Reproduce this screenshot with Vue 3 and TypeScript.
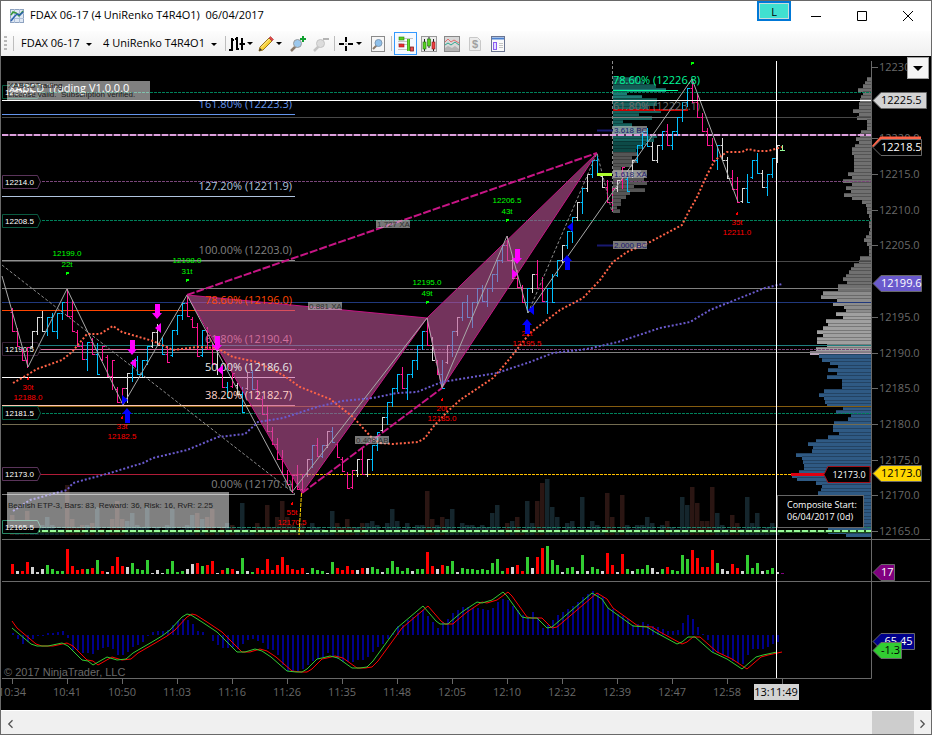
<script setup lang="ts">
type Kind = 'm' | 'c' | 'w'
interface Bar { x: number; top: number; bottom: number; open: number; close: number; kind: Kind }
interface Rule { y: number; color: string; x1?: number; x2?: number; dash?: string }

const STEP = 5
const FIRST = 12.5
const xAt = (i: number): number => FIRST + i * STEP

// Bars are written as "kind top bottom", in thirds of a pixel below the panel's origin.
const series: { origin: number; data: string }[] = [
  {
    origin: 240,
    data: 'm205-275 m263-320 m320-362 m320-383 w273-325 w232-285 w213-275 c232-288 c220-275 c220-297 c185-240 m147-232 m183-275 m270-320 m305-360 c305-392 m293-345 c310-405 m317-362 m345-410 m360-450 m440-490 m445-495 w400-490 c360-425 c348-405 c360-412 c317-375 w275-325 w253-318 c290-345 m317-370 c270-350 c225-285 c190-240 m165-230 m230-265 m250-350 c270-350 m262-330 m310-375 w330-405 m375-445 c425-475 m400-445 w430-465 c440-520 w395-450 c390-450 m420-480 m468-525 m498-575 m560-615 m595-660 m630-705 m690-735 m705-758 m675-750 m702-758 w658-710 c615-685 m595-650 c615-655 w572-625 c560-610 m607-655 m650-695 m695-747 m690-747 w658-712 m620-705 w658-710 c615-692 c575-632 w530-575 c487-555 c445-500 c403-457 m382-447 c403-480 c360-415 c315-390 c273-330 m235-317 w290-363 m360-405 c360-447 w315-372 c273-350 w232-287 c187-242 c165-235 c187-265 c145-192 c135-187 c145-200 c103-157 c60-125 c15-70',
  },
  {
    origin: 180,
    data: 'm168-243 w230-298 m270-325 m315-370 c325-400 w283-340 m240-327 m290-367 c325-402 c283-370 c240-292 w195-250 c153-208 c112-188 w67-122 c25-102',
  },
  {
    origin: 55,
    data: 'w357-412 c315-370 c297-360 w358-400 m375-445 m400-470 w375-412 m335-402 c365-412 w315-370 c270-325 c228-285 c220-275 w262-317 w270-325 c228-285 m207-272 c228-285 c185-242 c140-200 c98-155 m75-145 m115-190 m175-230 m220-272 m250-317 c270-345 w250-318 w305-372 m345-405 m365-443 w400-443 c357-443 c315-372 c295-358 w345-400 c357-422 c310-370 w270-325',
  },
]

const bars: Bar[] = []
let last = 312
for (const part of series) {
  for (const item of part.data.split(' ')) {
    const kind = item[0] as Kind
    const [a, b] = item.slice(1).split('-').map(Number)
    const top = Math.round(part.origin + a / 3)
    const bottom = Math.round(part.origin + b / 3)
    const down = (top + bottom) / 2 > last
    const close = down ? bottom - 1 : top
    const open = Math.min(bottom - 2, Math.max(top + 2, last))
    bars.push({ x: xAt(bars.length), top, bottom, open, close, kind })
    last = close
  }
}
const barPath = (kind: Kind): string =>
  bars
    .filter((b) => b.kind === kind)
    .map((b) => `M${b.x} ${b.top}V${b.bottom}M${b.x} ${b.open + 0.5}h-2M${b.x} ${b.close + 0.5}h2.5`)
    .join('')

const volume =
  'R10 W3 R3 R12 W7 W2 W5 G9 G5 G3 G3 R25 R8 R4 R5 G5 R6 G14 R3 W2 R8 R17 R8 W7 G11 G5 G4 G14 W1 W4 W1 G5 G13 G2 G3 W5 W10 R11 G8 R9 R13 W1 R4 G6 R5 W3 G16 W3 G2 R6 R4 R15 R4 R9 R17 R9 R5 R4 R6 W1 G6 G4 G3 W1 G12 R6 R4 R8 R4 W4 R6 W6 G7 G5 W2 G6 G13 G7 G3 G6 W3 G5 G5 R22 R8 W5 R9 G8 G13 W2 G6 G5 G5 G4 G5 G4 G11 G15 G3 R6 W7 R9 R3 G17 W6 R17 R26 G28 G14 G9 W2 G6 G7 W3 G19 W3 G7 G5 W3 R21 R9 W2 R20 G5 W3 G5 G5 G9 W6 W2 G5 R7 G4 G3 G19 G15 R24 R16 R7 R7 R24 G11 W5 W3 R10 R6 W3 G19 G6 G11 W3 G4 G6 W2'
    .split(' ')
    .map((s, i) => ({ kind: s[0], h: Number(s.slice(1)), x: xAt(i) }))

const macd = [
  2, -4, -9, -7, -4, -1, -1, 2, 2, 3, 4, -3, -15, -15, -18, -18, -19, -15, -13, -12, -14, -20, -20, -17, -12, -10, -7,
  -1, 3, 4, 4, 5, 10, 14, 16, 15, 11, 4, 3, 0, -6, -10, -13, -13, -12, -14, -9, -5, -4, -6, -8, -14, -15, -20, -30, -36,
  -36, -36, -34, -30, -26, -24, -22, -18, -21, -24, -27, -27, -27, -25, -25, -22, -17, -12, -9, -4, 2, 9, 10, 15, 18,
  22, 25, 19, 13, 7, 13, 16, 22, 25, 28, 28, 27, 27, 26, 25, 27, 33, 36, 35, 29, 25, 20, 18, 23, 18, 7, 10, 15, 20, 23,
  26, 29, 33, 38, 41, 44, 42, 38, 27, 26, 21, 19, 16, 10, 11, 13, 11, 9, 8, 6, 4, 4, 5, 12, 20, 16, 8, 1, -5, -17, -18,
  -20, -22, -26, -28, -29, -20, -14, -14, -14, -12, -9, -7,
]
const macdPath = macd.map((v, i) => `M${xAt(i) + 0.5} 635v${-v}`).join('')

const signal =
  '12,628 31,644 37,646 48,646 62,643 68,646 82,660 88,661 93,665 107,657 117,660 126,659 133,653 152,642 162,636 170,630 182,617 187,614 191,615 202,622 217,632 237,652 245,652 255,649 262,651 271,657 287,671 296,672 302,672 307,669 317,659 322,658 330,656 338,658 352,668 360,668 367,667 373,661 397,628 423,606 436,621 440,624 448,624 450,622 462,612 477,602 482,603 492,600 503,592 507,596 522,617 527,618 537,618 547,628 552,627 592,593 602,599 608,608 633,626 647,627 655,632 677,644 682,642 688,637 695,637 712,652 727,659 742,669 756,657 763,655 777,652'
const orangeMa =
  '13,383 27,375 37,369 62,360 72,352 87,334 100,334 113,326 122,332 153,341 173,350 197,347 217,348 233,357 257,362 283,375 300,387 330,399 353,417 372,438 380,443 393,444 418,442 425,438 433,427 447,412 460,400 493,378 507,362 530,333 560,310 583,298 600,280 613,262 627,252 650,242 682,225 688,213 697,197 707,175 715,160 727,152 742,152 748,149 757,151 768,151 782,147'
const purpleMa =
  '13,511 30,500 67,490 73,483 110,473 143,463 153,458 187,450 218,437 245,434 258,422 283,418 317,407 342,401 373,398 397,393 417,392 442,382 497,373 530,362 553,353 587,349 618,342 660,328 690,322 710,310 740,298 765,288 782,284'

// Row insets of the composite profile, in thirds of a pixel; 272 is an empty row.
const insets = [
  260, 255, 250, 235, 250, 243, 240, 238, 237, 218, 237, 231, 262, 262, 262, 243, 240, 227, 238, 225, 217, 215, 222, 222,
  222, 222, 222, 203, 215, 190, 215, 198, 212, 192, 215, 245, 257, 262, 262, 268, 270, 268, 268, 269, 267, 258, 252, 262,
  268, 266, 268, 240, 237, 222, 212, 208, 198, 190, 200, 175, 175, 130, 122, 170, 158, 193, 197, 168, 188, 137, 145, 130,
  112, 128, 111, 111, 140, 107, 90, 118, 127, 150, 173, 143, 170, 140, 187, 187, 187, 132, 116, 132, 135, 140, 188, 167,
  212, 203, 163, 158, 158, 178, 145, 108, 84, 99, 97, 48, 67, 69, 72, 72, 57, 35, 52, 108, 127, 122, 115, 140, 140, 130,
  120, 130, 140, 150, 160, 180, 145, 145, 198,
]
const composite = insets.map((v, i) => {
  const y = 77 + i * 3.51
  const color = y > 352 ? '#2f5a84' : y > 348 ? '#b9a6b9' : y > 310 ? '#a0a0a0' : y > 288 ? '#8c8c8c' : '#707070'
  return { x: 780 + v / 3, w: (272 - v) / 3, y, color }
})
// Row reach of the session profile, same unit, measured from 157.
const session = [
  233, 250, 285, 315, 200, 243, 290, 290, 262, 300, 235, 275, 187, 215, 230, 250, 290, 280, 255, 245, 225, 230, 215, 230,
  213, 182, 240, 255, 250, 258, 220, 252, 207, 195, 180, 182, 170, 178,
].map((v, i) => ({
  y: 77 + i * 3.57,
  w: (v - 157) / 3,
  color: i < 3 ? '#145a55' : i < 6 ? '#1c7a74' : i < 12 ? '#17605b' : i < 18 ? '#14605c' : i < 21 ? '#0d4a47' : '#555555',
}))

const rules: Rule[] = [
  { y: 92.5, color: '#00805a', dash: '3 1' },
  { y: 114.5, color: '#6495ed', x2: 295 },
  { y: 117.5, color: '#484848' },
  { y: 181.5, color: '#7a467a', dash: '3 1' },
  { y: 196.5, color: '#b0c4de', x2: 295 },
  { y: 220.5, color: '#00805a', dash: '3 1' },
  { y: 260.5, color: '#909090', x2: 295 },
  { y: 261.5, color: '#484848' },
  { y: 288.5, color: '#808080' },
  { y: 302.5, color: '#20387c' },
  { y: 310.5, color: '#ff4500', x2: 295 },
  { y: 345.5, color: '#1f7f7f' },
  { y: 349.5, color: '#7a467a', dash: '3 1' },
  { y: 349.5, color: '#db70a0', x2: 295 },
  { y: 352.5, color: '#808080' },
  { y: 377.5, color: '#ffffff', x2: 295 },
  { y: 405.5, color: '#ffc8b4', x2: 295 },
  { y: 406.5, color: '#855c10' },
  { y: 413.5, color: '#00805a', dash: '3 1' },
  { y: 424.5, color: '#736c50' },
  { y: 474.5, color: '#b01c38', x2: 300 },
  { y: 474.5, color: '#ffc000', x1: 300, x2: 791, dash: '3 1' },
  { y: 494.5, color: '#808080', x2: 295 },
  { y: 527.5, color: '#1f8068', dash: '4 1' },
]

const fibs = [
  { t: '161.80% (12223.3)', y: 108, c: '#6495ed' },
  { t: '127.20% (12211.9)', y: 190, c: '#b0c4de' },
  { t: '100.00% (12203.0)', y: 254, c: '#808080' },
  { t: '78.60% (12196.0)', y: 304, c: '#ff4500' },
  { t: '61.80% (12190.4)', y: 343, c: '#d0709c' },
  { t: '50.00% (12186.6)', y: 371, c: '#e8e8e8' },
  { t: '38.20% (12182.7)', y: 399, c: '#ffd0c8' },
  { t: '0.00% (12170.1)', y: 488, c: '#808080' },
]

const swingHighs = [
  { x: 67, y: 256, p: '12199.0', n: '22t' },
  { x: 187, y: 263, p: '12198.0', n: '31t' },
  { x: 427, y: 285, p: '12195.0', n: '49t' },
  { x: 507, y: 203, p: '12206.5', n: '43t' },
]
const swingLows = [
  { x: 28, y: 390, p: '12188.0', n: '30t' },
  { x: 122, y: 429, p: '12182.5', n: '33t' },
  { x: 292, y: 515, p: '12170.5', n: '55t' },
  { x: 442, y: 411, p: '12185.0', n: '20t' },
  { x: 527, y: 336, p: '12195.5', n: '22t' },
  { x: 737, y: 225, p: '12211.0', n: '35t' },
]
const markers = [
  { y: 92, t: '12226.5', c: '#0a5a40' },
  { y: 182, t: '12214.0', c: '#5a345a' },
  { y: 221, t: '12208.5', c: '#0a5a40' },
  { y: 349, t: '12190.5', c: '#3a243a' },
  { y: 413, t: '12181.5', c: '#0a5a40' },
  { y: 474, t: '12173.0', c: '#5a345a' },
  { y: 527, t: '12165.5', c: '#2a8a68' },
]
const ratios = [
  { x: 376, y: 220, t: '1.727 XA' },
  { x: 308, y: 302, t: '0.881 XA' },
  { x: 355, y: 436, t: '0.408 AB' },
  { x: 613, y: 126, t: '3.618 BC' },
  { x: 613, y: 170, t: '1.618 XA' },
  { x: 613, y: 241, t: '2.000 BC' },
]
const downArrows = [[157, 304], [132, 340], [217, 336], [517, 249]]
const upArrows = [[127, 408], [527, 319], [567, 255]]
const leftFlags = [[155, 328, '#ff00ff'], [130, 363, '#ff00ff'], [217, 370, '#ff00ff'], [528, 310, '#0000ff'], [567, 227, '#0000ff']]
const rightFlags = [[122, 400, '#0000ff'], [512, 274, '#ff00ff']]

const prices = [12230, 12220, 12215, 12210, 12205, 12195, 12190, 12185, 12180, 12175, 12170, 12165]
const priceY = (p: number): number => Math.round(531 - (p - 12165) * 7.14)
const times = ['10:34', '10:41', '10:50', '11:03', '11:16', '11:26', '11:35', '11:48', '12:05', '12:10', '12:32', '12:39', '12:47', '12:58']
const tags = [
  { y: 100, x2: 926, t: '12225.5', fill: '#d3d3d3', ink: '#000' },
  { y: 147, x2: 921, t: '12218.5', fill: '#000', ink: '#fff' },
  { y: 283, x2: 921, t: '12199.6', fill: '#6a5acd', ink: '#fff' },
  { y: 473, x2: 921, t: '12173.0', fill: '#ffd700', ink: '#000' },
  { y: 572, x2: 894, t: '17', fill: '#800080', ink: '#fff' },
  { y: 641, x2: 914, t: '-65.45', fill: '#00008b', ink: '#fff' },
  { y: 650, x2: 901, t: '-1.3', fill: '#32cd32', ink: '#000' },
]
</script>

<template>
  <div class="window">
    <header class="titlebar">
      <svg class="appicon" viewBox="0 0 14 14" aria-hidden="true">
        <rect x="0.500" y="0.500" width="13" height="13" fill="#dfe8f4" stroke="#8ea3c0" />
        <path d="M0 4.500h14M0 9.500h14M4.500 0v14M9.500 0v14" stroke="#aebfd8" />
        <path d="M1 6l2-3 3 1 3 3 4-5" fill="none" stroke="#3c9a3c" stroke-width="1.500" />
        <path d="M1 12l3-4 3-3 3 1 3-3" fill="none" stroke="#2c5fae" stroke-width="1.500" />
      </svg>
      <h1>FDAX 06-17 (4 UniRenko T4R4O1)&nbsp; 06/04/2017</h1>
      <button class="link" type="button">L</button>
      <button class="win" type="button" aria-label="Minimize"><svg viewBox="0 0 12 12"><path d="M1 6.500h10" /></svg></button>
      <button class="win" type="button" aria-label="Maximize"><svg viewBox="0 0 12 12"><path d="M1.500 1.500h9v9h-9z" /></svg></button>
      <button class="win" type="button" aria-label="Close"><svg viewBox="0 0 12 12"><path d="M1 1l10 10M11 1L1 11" /></svg></button>
    </header>

    <nav class="toolbar" aria-label="Chart tools">
      <span class="grip"></span>
      <span class="sep"></span>
      <span class="pick instrument"><select aria-label="Instrument"><option>FDAX 06-17</option></select></span>
      <span class="pick interval"><select aria-label="Interval"><option>4 UniRenko T4R4O1</option></select></span>
      <span class="sep"></span>
      <button type="button" class="drop" aria-label="Bar style">
        <svg viewBox="0 0 16 16"><path d="M3 2v13M0 14h3M3 4h2M8 1v13M6 3h2M8 13h2M13 2v12M13 8h3M10.500 8H13" fill="none" stroke="#000" stroke-width="2" /></svg>
      </button>
      <button type="button" class="drop" aria-label="Drawing tools">
        <svg viewBox="0 0 16 16">
          <path d="M1 15l1-4L11 2l3 3-9 9z" fill="#f7d038" stroke="#9a7420" />
          <path d="M3 11.500L11.500 3" stroke="#fff0a0" /><path d="M11 2l1.500-1.500L15.500 3.500 14 5z" fill="#e04848" stroke="#a83838" stroke-width="0.600" />
          <path d="M1 15l1-3 2 2z" fill="#333" />
        </svg>
      </button>
      <button type="button" class="tool" aria-label="Zoom in">
        <svg viewBox="0 0 16 16">
          <path d="M1 15l5-5" stroke="#8a7a6a" stroke-width="2.500" /><circle cx="7.500" cy="7.500" r="4" fill="#9cc8ec" stroke="#9a9a9a" />
          <path d="M13 0v6M10 3h6" stroke="#10a030" stroke-width="2" />
        </svg>
      </button>
      <button type="button" class="tool" aria-label="Zoom out">
        <svg viewBox="0 0 16 16">
          <path d="M1 15l5-5" stroke="#c4c4c4" stroke-width="2.500" /><circle cx="7.500" cy="7.500" r="4" fill="#dcdcdc" stroke="#c4c4c4" />
          <path d="M10 3h6" stroke="#b4b4b4" stroke-width="2" />
        </svg>
      </button>
      <span class="sep"></span>
      <button type="button" class="drop" aria-label="Cursor">
        <svg viewBox="0 0 16 16"><path d="M8 1v5M8 10v5M1 8h5M10 8h5" stroke="#000" stroke-width="2" /><path d="M7.500 8h1" stroke="#000" /></svg>
      </button>
      <button type="button" class="tool" aria-label="Data box">
        <svg viewBox="0 0 16 16">
          <rect x="1.500" y="0.500" width="13" height="15" fill="#f6f6f6" stroke="#8a8a8a" />
          <path d="M3 13l4-4" stroke="#8a7a6a" stroke-width="2" /><circle cx="8.500" cy="7" r="3.500" fill="#8fc0ea" stroke="#7d99b4" />
        </svg>
      </button>
      <span class="sep"></span>
      <button type="button" class="tool on" aria-label="Chart trader">
        <svg viewBox="0 0 16 16">
          <path d="M6 2.500h9M0 5.500h9M6 8.500h3M0 13.500h11M0 8h4" stroke="#c4c4c4" />
          <rect x="1" y="1" width="5" height="3" fill="#58d020" stroke="#2c8010" stroke-width="0.600" /><rect x="1" y="8" width="5" height="3" fill="#e83030" stroke="#a01818" stroke-width="0.600" />
          <path d="M10.500 3v12" stroke="#2c8010" stroke-width="3" /><path d="M10.500 3v12" stroke="#66e030" stroke-width="2" />
          <rect x="12.500" y="11" width="3" height="4" fill="#e85050" stroke="#802020" stroke-width="0.800" />
        </svg>
      </button>
      <button type="button" class="tool" aria-label="Data series">
        <svg viewBox="0 0 16 16">
          <rect x="0.500" y="0.500" width="15" height="15" fill="#ececec" stroke="#999" />
          <path d="M3.500 3v12M8 1v11M12.500 3v12" stroke="#222" /><rect x="2" y="6" width="3" height="7" fill="#58d020" stroke="#207010" stroke-width="0.600" />
          <rect x="6.500" y="3" width="3" height="7" fill="#58d020" stroke="#207010" stroke-width="0.600" /><rect x="11" y="6" width="3" height="7" fill="#f04040" stroke="#801818" stroke-width="0.600" />
        </svg>
      </button>
      <button type="button" class="tool" aria-label="Indicators">
        <svg viewBox="0 0 16 16">
          <rect x="0.500" y="0.500" width="15" height="15" fill="#d8d8d8" stroke="#888" /><path d="M1 12l3-2 4 2 3-2 4 3v2H1z" fill="#b4b4b4" />
          <path d="M1 6l3-3 3 3 3-2 5 3" fill="none" stroke="#e07070" /><path d="M1 9l3-2 3 2 4-3 4 3" fill="none" stroke="#30a890" />
        </svg>
      </button>
      <button type="button" class="tool" aria-label="Strategies">
        <svg viewBox="0 0 16 16">
          <path d="M2.500 1.500h8l3 3v10h-11z" fill="#ececec" stroke="#c8c8c8" />
          <text x="8" y="12" text-anchor="middle" class="dollar">$</text>
        </svg>
      </button>
      <button type="button" class="tool" aria-label="Properties">
        <svg viewBox="0 0 16 16">
          <rect x="1.500" y="0.500" width="13" height="15" fill="#fafafa" stroke="#6a7490" /><path d="M2 2.500h12" stroke="#4a80d0" stroke-width="2" />
          <rect x="3.500" y="6.500" width="3" height="7" fill="#e4dcff" stroke="#8a5cf0" /><path d="M9 7.500h4M9 9.500h4M9 11.500h4" stroke="#c4c4c4" />
        </svg>
      </button>
    </nav>

    <main class="chart">
      <svg class="plot" viewBox="1 56 930 654" role="img" aria-label="FDAX 06-17 price chart">
        <!-- dimmed volume behind the price panel -->
        <rect v-for="(v, i) in volume" :key="'d' + i" :x="v.x - 2.5" :y="535 - v.h * 2" width="4.500" :height="v.h * 2" :fill="v.kind === 'R' ? '#2b1613' : '#15262d'" />

        <g shape-rendering="crispEdges">
          <rect v-for="(r, i) in composite" :key="'p' + i" :x="r.x" :y="r.y" :width="r.w" height="4" :fill="r.color" />
          <rect v-for="(r, i) in session" :key="'s' + i" x="613" :y="r.y" :width="r.w" height="4" :fill="r.color" />
        </g>
        <g fill="#000" fill-opacity="0.250" shape-rendering="crispEdges">
          <rect v-for="(r, i) in composite" :key="'pl' + i" :x="r.x" :y="r.y" :width="r.w" height="1" />
          <rect v-for="(r, i) in session" :key="'sl' + i" x="613" :y="r.y" :width="r.w" height="1" />
        </g>

        <line v-for="(l, i) in rules" :key="'r' + i" :x1="l.x1 ?? 2" :x2="l.x2 ?? 871" :y1="l.y" :y2="l.y" :stroke="l.color" :stroke-dasharray="l.dash" />
        <path d="M613 90.500h65" stroke="#00fa9a" /><path d="M613 117.500h65" stroke="#808080" />
        <path d="M613 110h75" stroke="#d00000" stroke-width="2" /><path d="M791 474.500h80" stroke="#e00010" stroke-width="3" />
        <path d="M2 135h869" stroke="#5a3a5a" stroke-width="2" /><path d="M2 135h869" stroke="#dda0dd" stroke-width="2" stroke-dasharray="6 2" />
        <path d="M2 531.500h869" stroke="#1c4a1c" stroke-width="3" /><path d="M2 531h869" stroke="#98fb98" stroke-width="2" stroke-dasharray="6 2" />

        <g v-for="m in markers" :key="m.t">
          <path :d="`M2.500 ${m.y - 6.5}h35l3 6.500-3 6.500h-35z`" fill="#000" :stroke="m.c" />
          <text x="5" :y="m.y + 3" class="tiny" fill="#fff">{{ m.t }}</text>
        </g>

        <g fill="none">
          <path :d="barPath('m')" stroke="#ff1493" /><path :d="barPath('c')" stroke="#00bfff" /><path :d="barPath('w')" stroke="#dcdcdc" />
          <path d="M782.500 145v5M780 150.500h5" stroke="#98fb98" />
        </g>

        <path d="M187 295L427 318 302 493z M427 318L597 153 442 388z" fill="#c0559a" fill-opacity="0.600" stroke="#c71585" />

        <g fill="none">
          <path d="M2 276L28 367 67 289 123 405 187 295 292 492 427 318 442 388 507 236 528 313 692 79 738 202" stroke="#a9a9a9" />
          <path d="M2 265L295 494M528 313L597 153 612 212M612.500 61v151" stroke="#8c8c8c" stroke-dasharray="3 2" />
          <polyline :points="orangeMa" stroke="#ff6347" stroke-width="2" stroke-dasharray="2 2" />
          <polyline :points="purpleMa" stroke="#6a5acd" stroke-width="2" stroke-dasharray="2 2" />
          <path d="M187 295L597 153M302 493L442 388" stroke="#c71585" stroke-width="2" stroke-dasharray="8 2" />
        </g>

        <text v-for="f in fibs" :key="f.t" x="292" :y="f.y" text-anchor="end" class="label" :fill="f.c">{{ f.t }}</text>
        <text x="613" y="84" class="label" fill="#00fa9a">78.60% (12226.8)</text>
        <text x="613" y="110" class="label" fill="#6e6e6e">61.80% (12223.1)</text>

        <g v-for="s in swingHighs" :key="'h' + s.x" class="tiny" fill="#00ff00" text-anchor="middle">
          <text :x="s.x" :y="s.y">{{ s.p }}</text><text :x="s.x" :y="s.y + 11">{{ s.n }}</text>
          <path :d="`M${s.x - 1} ${s.y + 16}h3v2h-2v1h-1z`" />
        </g>
        <path d="M691 62h3v2h-2v1h-1z" fill="#00ff00" />
        <g v-for="s in swingLows" :key="'l' + s.x" class="tiny" fill="#ff0000" text-anchor="middle">
          <text :x="s.x" :y="s.y">{{ s.n }}</text><text :x="s.x" :y="s.y + 10">{{ s.p }}</text>
          <path :d="`M${s.x - 1} ${s.y - 12}h1v-1h1v3h-2z`" />
        </g>

        <path v-for="(a, i) in downArrows" :key="'da' + i" :d="`M${a[0] - 2} ${a[1]}h5v9h2l-5 6-5-6h3z`" fill="#ff00ff" />
        <path v-for="(a, i) in upArrows" :key="'ua' + i" :d="`M${a[0] - 2} ${a[1] + 15}h5v-9h2l-5-6-5 6h3z`" fill="#0000ff" />
        <path v-for="(f, i) in leftFlags" :key="'lf' + i" :d="`M${f[0]} ${f[1]}l6-5v10z`" :fill="String(f[2])" />
        <path v-for="(f, i) in rightFlags" :key="'rf' + i" :d="`M${f[0]} ${f[1]}v-5l6 5-6 5z`" :fill="String(f[2])" />

        <path d="M301.500 493L299 535" stroke="#ffd700" stroke-dasharray="4 1" />
        <path d="M597 174.500h15" stroke="#adff2f" stroke-width="3" />
        <path d="M597 130.500h16M597 245.500h16" stroke="#191970" stroke-width="2" />

        <g v-for="r in ratios" :key="r.t">
          <rect :x="r.x" :y="r.y" width="34" height="8" fill="#c8c8c8" fill-opacity="0.600" />
          <text :x="r.x + 1" :y="r.y + 7" class="tiny" :fill="r.x > 600 ? '#191970' : '#303030'">{{ r.t }}</text>
        </g>

        <rect x="7" y="81" width="143" height="19" fill="#fff" fill-opacity="0.500" />
        <text x="9" y="92" class="label" fill="#fff">XABCD Trading V1.0.0.0</text>
        <text x="8" y="88" class="note">XABCDTrading</text>
        <text x="8" y="97" class="note">License valid.&nbsp; Subscription verified.</text>
        <rect x="7" y="492" width="222" height="36" fill="#fff" fill-opacity="0.500" />
        <text x="8" y="508" class="note">Bearish ETP-3, Bars: 83, Reward: 36, Risk: 16, RvR: 2.25</text>

        <rect x="777.500" y="495.500" width="86" height="32" fill="#000" stroke="#666" />
        <text x="787" y="508" class="box">Composite Start:</text>
        <text x="787" y="520" class="box">06/04/2017 (0d)</text>
        <path d="M824 474.500l4-8h42v16h-42z" fill="#000" stroke="#a01018" />
        <text x="849" y="478" text-anchor="middle" class="box">12173.0</text>

        <!-- volume and MACD panels -->
        <rect v-for="(v, i) in volume" :key="'v' + i" :x="v.x - 1.5" :y="574 - v.h" width="3" :height="v.h" :fill="v.kind === 'R' ? '#ff0000' : v.kind === 'G' ? '#32cd32' : '#d3d3d3'" />
        <path d="M781 573.500h3" stroke="#800080" />
        <path :d="macdPath" stroke="#00008b" stroke-width="2" />
        <polyline :points="signal" transform="translate(5 0)" fill="none" stroke="#ff0000" />
        <path d="M12 621l5 7" stroke="#ff0000" />
        <polyline :points="signal" fill="none" stroke="#32cd32" />
        <text x="4" y="676" class="copy">© 2017 NinjaTrader, LLC</text>

        <path d="M871.500 61v617.500H2M2 539.500h928M2 581.500h928" fill="none" stroke="#696969" />
        <path d="M2 100.500h869M776.500 61v617" stroke="#fff" />

        <g v-for="p in prices" :key="p">
          <path :d="`M872 ${priceY(p) + 0.5}h6`" stroke="#696969" />
          <text x="879" :y="priceY(p) + 4" class="label" fill="#696969">{{ p }}.0</text>
        </g>
        <g v-for="(t, i) in times" :key="t">
          <path :d="`M${12.5 + i * 55} 679v5`" stroke="#696969" />
          <text :x="12 + i * 55" y="696" text-anchor="middle" class="label" fill="#696969">{{ t }}</text>
        </g>
        <path d="M782.500 679v5" stroke="#696969" />
        <rect x="754" y="684" width="45" height="16" fill="#d3d3d3" />
        <text x="776" y="696" text-anchor="middle" class="label" fill="#000">13:11:49</text>

        <path d="M873 147l8-9h40" fill="none" stroke="#ff6347" stroke-width="3" />
        <g v-for="g in tags" :key="g.t">
          <path :d="`M873 ${g.y}.500l8-8H${g.x2}.500v16H881z`" :fill="g.fill" stroke="#696969" />
          <text x="881" :y="g.y + 4" class="label" :fill="g.ink">{{ g.t }}</text>
        </g>
      </svg>
      <button class="menu" type="button" aria-label="Panel menu"></button>
    </main>

    <footer class="scroll">
      <button type="button" aria-label="Scroll left"><svg viewBox="0 0 8 8"><path d="M6 1L3 4l3 3" /></svg></button>
      <span class="track"></span>
      <span class="thumb"></span>
      <button type="button" aria-label="Scroll right"><svg viewBox="0 0 8 8"><path d="M2 1l3 3-3 3" /></svg></button>
    </footer>
  </div>
</template>

<style>
body {
  background: #000;
}
</style>

<style scoped>
.window {
  border: 1px solid #696969;
  background: #000;
  font-family: 'Open Sans', 'Noto Sans', sans-serif;
}
button {
  padding: 0;
  border: 0;
  background: none;
  font: inherit;
}
.titlebar {
  display: flex;
  align-items: center;
  height: 30px;
  background: #fff;
}
.appicon {
  width: 14px;
  height: 14px;
  margin: 0 6px 0 9px;
}
h1 {
  flex: 1;
  margin: 0;
  font-size: 11px;
  line-height: 16px;
  padding-bottom: 2px;
  font-weight: 400;
  color: #000;
}
.link {
  align-self: flex-start;
  width: 34px;
  height: 20px;
  margin-right: 2px;
  border: 2px solid #0078d7;
  background: #40e0d0;
  box-shadow: inset 0 0 0 1px #c8dcdc;
  font-size: 11px;
  line-height: 15px;
}
.win {
  width: 46px;
  height: 30px;
}
.win svg {
  width: 12px;
  height: 12px;
  fill: none;
  stroke: #000;
}
.toolbar {
  display: flex;
  align-items: center;
  height: 25px;
  padding-left: 3px;
  background: linear-gradient(#fdfdfd, #efefef);
}
.toolbar > * {
  flex-shrink: 0;
}
.grip {
  width: 3px;
  height: 15px;
  margin-right: 4px;
  background: repeating-linear-gradient(#b8b8b8 0 2px, transparent 2px 4px);
}
.sep {
  width: 1px;
  height: 15px;
  margin: 0 2px;
  background: #bdbdbd;
}
.pick {
  position: relative;
  display: flex;
}
.pick::after,
.drop::after {
  content: '';
  border: 3px solid transparent;
  border-top-color: #000;
  border-bottom: 0;
}
.pick::after {
  position: absolute;
  right: 6px;
  top: 9px;
}
.instrument {
  width: 82px;
}
.interval {
  width: 125px;
}
.pick select {
  appearance: none;
  width: 100%;
  height: 20px;
  padding: 0 0 2px 5px;
  border: 0;
  background: none;
  font: 11px 'Open Sans', 'Noto Sans', sans-serif;
  color: #000;
}
.toolbar svg {
  width: 16px;
  height: 16px;
}
.drop {
  display: flex;
  align-items: center;
  gap: 2px;
  width: 29px;
  padding-left: 1px;
}
.tool {
  display: flex;
  align-items: center;
  justify-content: center;
  width: 23px;
  height: 23px;
}
.on {
  border: 1px solid #3399ff;
  background: #f4f9ff;
}
.dollar {
  font: bold 11px 'Liberation Sans', sans-serif;
  fill: #a0a0a0;
}
.chart {
  position: relative;
}
.plot {
  display: block;
  width: 100%;
}
.label {
  font-size: 11px;
}
.tiny,
.note {
  font-family: 'Liberation Sans', sans-serif;
  font-size: 8px;
}
.note {
  fill: #1c1c1c;
}
.box {
  font-size: 9px;
  fill: #fff;
}
.copy {
  font-family: 'Liberation Sans', sans-serif;
  font-size: 11px;
  fill: #696969;
}
.menu {
  position: absolute;
  top: 1px;
  right: 2px;
  width: 22px;
  height: 22px;
  border: 1px solid #a0a0a0;
  background: #f4f4f4;
}
.menu::before {
  content: '';
  display: block;
  width: 0;
  margin: 0 auto;
  border: 5px solid transparent;
  border-top-color: #000;
  border-bottom: 0;
}
.scroll {
  display: flex;
  align-items: stretch;
  height: 23px;
  border-top: 1px solid #fff;
  background: #f0f0f0;
}
.scroll button {
  width: 17px;
}
.scroll svg {
  width: 10px;
  height: 10px;
  fill: none;
  stroke: #505050;
  stroke-width: 1px;
}
.track {
  flex: 1;
}
.thumb {
  width: 42px;
  background: #cdcdcd;
}
</style>
